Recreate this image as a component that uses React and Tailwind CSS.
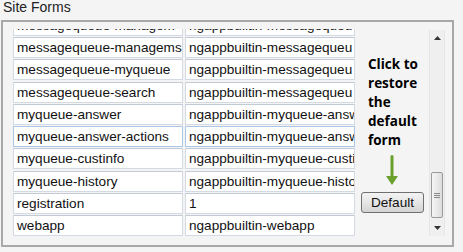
import React from 'react';

const rows = [
  { name: 'messagequeue-managem', value: 'ngappbuiltin-messagequeu' },
  { name: 'messagequeue-managems', value: 'ngappbuiltin-messagequeu' },
  { name: 'messagequeue-myqueue', value: 'ngappbuiltin-messagequeu' },
  { name: 'messagequeue-search', value: 'ngappbuiltin-messagequeu' },
  { name: 'myqueue-answer', value: 'ngappbuiltin-myqueue-answ' },
  { name: 'myqueue-answer-actions', value: 'ngappbuiltin-myqueue-answ', focus: true },
  { name: 'myqueue-custinfo', value: 'ngappbuiltin-myqueue-custi' },
  { name: 'myqueue-history', value: 'ngappbuiltin-myqueue-histo' },
  { name: 'registration', value: '1' },
  { name: 'webapp', value: 'ngappbuiltin-webapp' },
];

function Field({ text, focus }) {
  return (
    <div
      className={
        'w-[170px] h-[21px] bg-white border overflow-hidden whitespace-nowrap pl-[3px] leading-[19px] text-[13.6px] text-[#111] ' +
        (focus ? 'border-[#a9c6e6]' : 'border-[#d3dae3] border-t-[#c2cad5]')
      }
    >
      {text}
    </div>
  );
}

function Scrollbar() {
  return (
    <div className="w-[16px] h-full bg-[#efefef] border-x border-[#e6e6e6] flex flex-col items-center">
      <div className="h-[16px] w-full flex items-center justify-center">
        <svg width="7" height="4" viewBox="0 0 7 4"><path d="M0 4 L3.5 0 L7 4 Z" fill="#333" /></svg>
      </div>
      <div className="flex-1 w-full flex flex-col">
        <div className="h-[126px]" />
        <div className="h-[46px] mx-px rounded-[2px] border border-[#9a9a9a] bg-gradient-to-r from-[#f6f6f6] to-[#dcdcdc] flex flex-col items-center justify-center gap-[1px]">
          <div className="w-[6px] h-px bg-[#8a8a8a]" />
          <div className="w-[6px] h-px bg-[#8a8a8a]" />
          <div className="w-[6px] h-px bg-[#8a8a8a]" />
        </div>
      </div>
      <div className="h-[16px] w-full flex items-center justify-center">
        <svg width="7" height="4" viewBox="0 0 7 4"><path d="M0 0 L3.5 4 L7 0 Z" fill="#333" /></svg>
      </div>
    </div>
  );
}

export default function App() {
  return (
    <div className="w-[463px] h-[252px] bg-[#f4f4f4] font-[family-name:'Liberation_Sans',Arial,sans-serif] overflow-hidden">
      <div className="h-[20px] pl-[3px] text-[14px] leading-[15px] text-[#222]">Site Forms</div>
      <div className="ml-px w-[453px] h-[227px] border-2 border-[#a8a8a8] pt-[7px]">
        <div className="flex h-[207px]">
          <div className="w-[354px] pl-[10px] overflow-hidden">
            <div className="mt-[-14.25px] flex flex-col gap-[1.25px]">
              {rows.map((r) => (
                <div key={r.name} className="flex gap-[2px]">
                  <Field text={r.name} focus={r.focus} />
                  <Field text={r.value} focus={r.focus} />
                </div>
              ))}
            </div>
          </div>
          <div className="w-[72px] relative">
            <div className="pl-[11px] pt-[26px] font-[family-name:'Open_Sans',sans-serif] font-bold text-[13.5px] leading-[19px] text-black">
              Click to<br />restore<br />the<br />default<br />form
            </div>
            <svg className="absolute left-[29px] top-[126px]" width="12" height="31" viewBox="0 0 12 31">
              <rect x="4.5" y="0" width="3" height="23" rx="1.5" fill="#6aa12c" />
              <path d="M0 21 L12 21 L6 30 Z" fill="#6aa12c" />
            </svg>
            <button className="absolute left-[4px] top-[163px] w-[63px] h-[21px] rounded-[3px] border border-[#707070] bg-gradient-to-b from-[#f3f3f3] via-[#e6e6e6] to-[#d3d3d3] text-[13.6px] leading-[19px] text-[#111]">
              Default
            </button>
          </div>
          <div className="pt-px">
            <Scrollbar />
          </div>
        </div>
      </div>
    </div>
  );
}
